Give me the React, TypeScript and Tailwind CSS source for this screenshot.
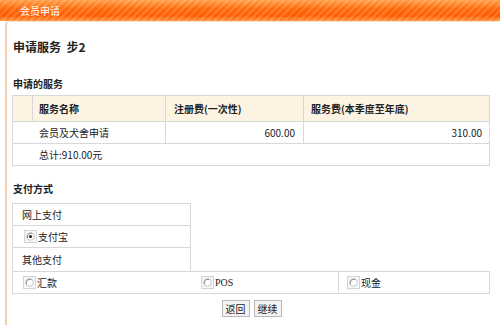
import React from 'react';

const font = "font-['SimSun','Noto_Sans_CJK_SC',sans-serif]";

const Radio = ({ checked = false }: { checked?: boolean }) => (
  <svg width="13" height="13" viewBox="0 0 13 13" className="shrink-0">
    <rect x="0.5" y="0.5" width="12" height="12" fill="#f7f7f7" stroke="#d4d4d4" />
    <circle cx="6.5" cy="6.5" r="3.8" fill="#fff" stroke="#c8c8c8" strokeWidth="1" />
    <path d="M3.4 8.2 A3.8 3.8 0 0 1 8.2 3.4" fill="none" stroke="#8a8a8a" strokeWidth="1" />
    {checked && <circle cx="6.5" cy="6.5" r="1.6" fill="#222" />}
  </svg>
);

const App = () => {
  return (
    <div className={`w-[500px] h-[325px] bg-white overflow-hidden text-[10px] text-[#222] ${font}`}>
      <div className="h-[21px] flex items-center pl-[20px] text-white text-[10px] bg-[image:repeating-linear-gradient(135deg,rgba(255,255,255,0.16)_0_2px,transparent_2px_5px),linear-gradient(to_bottom,#ffa24c,#ff6a0a_40%,#ff5c00_75%,#ff9440)]">
        会员申请
      </div>

      <div className="ml-[5px] h-[304px] border-l-2 border-t border-l-[#f3cfae] border-t-[#f6e4d4] rounded-tl-[4px] pl-[5px] pt-[17px]">
        <div className="pl-[1px] h-[16px] leading-[16px] text-[12px] font-bold">申请服务&nbsp;&nbsp;步2</div>

        <div className="mt-[22px] pl-[1px] h-[14px] leading-[14px] font-bold">申请的服务</div>

        <div className="mt-[4px] w-[478px] border border-[#d8d8d8]">
          <div className="grid grid-cols-[19px_133px_138px_1fr] h-[25px] bg-[#fdf3e2] font-bold">
            <div />
            <div className="border-l border-[#d8d8d8] flex items-center pl-[6px]">服务名称</div>
            <div className="border-l border-[#d8d8d8] flex items-center pl-[8px]">注册费(一次性)</div>
            <div className="border-l border-[#d8d8d8] flex items-center pl-[7px]">服务费(本季度至年底)</div>
          </div>
          <div className="grid grid-cols-[19px_133px_138px_1fr] h-[22px] border-t border-[#d8d8d8]">
            <div />
            <div className="flex items-center pl-[7px]">会员及犬舍申请</div>
            <div className="border-l border-[#d8d8d8] flex items-center justify-end pr-[8px]">600.00</div>
            <div className="border-l border-[#d8d8d8] flex items-center justify-end pr-[7px]">310.00</div>
          </div>
          <div className="grid grid-cols-[19px_1fr] h-[22px] border-t border-[#d8d8d8]">
            <div />
            <div className="flex items-center pl-[7px]">总计:910.00元</div>
          </div>
        </div>

        <div className="mt-[16px] pl-[1px] h-[14px] leading-[14px] font-bold">支付方式</div>

        <div className="mt-[7px] w-[478px]">
          <div className="w-[179px] border-l border-r border-t border-[#d8d8d8]">
            <div className="h-[22px] border-b border-[#d8d8d8] flex items-center pl-[9px]">网上支付</div>
            <div className="h-[22px] border-b border-[#d8d8d8] flex items-center pl-[11px] gap-[1px]">
              <Radio checked />
              <span>支付宝</span>
            </div>
            <div className="h-[23px] flex items-center pl-[9px]">其他支付</div>
          </div>
          <div className="grid grid-cols-[187px_138px_1fr] h-[23px] border border-[#d8d8d8]">
            <div className="flex items-center pl-[10px] gap-[1px]">
              <Radio />
              <span>汇款</span>
            </div>
            <div className="flex items-center pl-[1px] gap-[1px]">
              <Radio />
              <span className="font-['Liberation_Serif',serif]">POS</span>
            </div>
            <div className="border-l border-[#d8d8d8] flex items-center pl-[8px] gap-[1px]">
              <Radio />
              <span>现金</span>
            </div>
          </div>
        </div>

        <div className="mt-[6px] flex justify-center gap-[4px] pr-[9px]">
          <button className="h-[17px] px-[3px] border border-[#b8b8b8] bg-[#f3f3f3] text-[10px] leading-none">返回</button>
          <button className="h-[17px] px-[3px] border border-[#b8b8b8] bg-[#f3f3f3] text-[10px] leading-none">继续</button>
        </div>
      </div>
    </div>
  );
};

export default App;
